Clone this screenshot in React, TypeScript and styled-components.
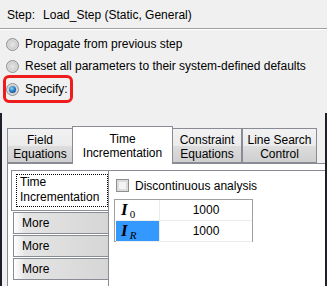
import styled, { createGlobalStyle } from "styled-components";

const Global = createGlobalStyle`
  html, body {
    margin: 0;
    padding: 0;
    background: #f0f0f0;
  }
  body {
    font-family: "Liberation Sans", Arial, sans-serif;
    font-size: 12px;
    color: #000;
  }
`;

const Page = styled.div`
  width: 327px;
  height: 286px;
  overflow: hidden;
  background: #f0f0f0;
`;

const Header = styled.div`
  height: 28px;
  display: flex;
  align-items: center;
  padding: 1px 0 0 7px;
  box-sizing: border-box;
`;

const StepName = styled.span`
  margin-left: 8px;
`;

const Separator = styled.div`
  height: 1px;
  background: #a0a0a0;
  border-bottom: 1px solid #fff;
`;

const RadioGroup = styled.div`
  display: flex;
  flex-direction: column;
  align-items: flex-start;
  padding: 3px 0 0 3px;
`;

const RadioRow = styled.div<{ $highlight?: boolean }>`
  display: flex;
  align-items: center;
  gap: 6px;
  height: 22px;
  white-space: nowrap;
  padding: 0 ${(p) => (p.$highlight ? "2px" : "0")} 0 ${(p) => (p.$highlight ? "0" : "3px")};
  border: ${(p) => (p.$highlight ? "3px solid #ee1c1c" : "none")};
  border-radius: 6px;
  margin-top: ${(p) => (p.$highlight ? "-2px" : "0")};
`;

const RadioDot = styled.span<{ $checked?: boolean }>`
  width: 13px;
  height: 13px;
  box-sizing: border-box;
  border-radius: 50%;
  border: 1px solid #8e8f8f;
  background: radial-gradient(circle at 50% 50%, #e6e6e6 0%, #d0d0d0 55%, #f6f6f6 100%);
  display: flex;
  align-items: center;
  justify-content: center;
  flex: none;

  &::after {
    content: "";
    display: ${(p) => (p.$checked ? "block" : "none")};
    width: 7px;
    height: 7px;
    border-radius: 50%;
    background: radial-gradient(circle at 40% 35%, #8fd3ff 0%, #1a6fb8 55%, #0d3f7a 100%);
  }
`;

const Frame = styled.div`
  margin-top: 10px;
  height: 173px;
  border-left: 2px solid #1d1f2b;
  border-right: 2px solid #1d1f2b;
  padding: 13px 0 0 5px;
  box-sizing: border-box;
`;

const TabBar = styled.div`
  display: flex;
  align-items: flex-end;
  height: 37px;
  position: relative;
  z-index: 1;
`;

const Tab = styled.div<{ $active?: boolean; $w: number }>`
  width: ${(p) => p.$w}px;
  box-sizing: border-box;
  height: ${(p) => (p.$active ? "38px" : "35px")};
  margin: 0 ${(p) => (p.$active ? "-1px" : "0")} ${(p) => (p.$active ? "-1px" : "0")}
    ${(p) => (p.$active ? "-1px" : "0")};
  border: 1px solid #898c95;
  border-bottom: ${(p) => (p.$active ? "none" : "1px solid #898c95")};
  background: ${(p) =>
    p.$active ? "#fff" : "linear-gradient(#f2f2f2, #ebebeb 50%, #dddddd 51%, #cfcfcf)"};
  display: flex;
  flex-direction: column;
  align-items: center;
  justify-content: center;
  line-height: 14px;
  text-align: center;
  white-space: nowrap;
  padding-top: ${(p) => (p.$active ? "0" : "3px")};
`;

const Panel = styled.div`
  border-top: 1px solid #898c95;
  border-left: 1px solid #898c95;
  background: #fff;
  height: 200px;
  padding: 6px 0 0 3px;
  display: flex;
`;

const SideTabs = styled.div`
  width: 97px;
  display: flex;
  flex-direction: column;
  align-items: flex-end;
  border-right: 1px solid #898c95;
  background: #fff;
`;

const SideActive = styled.div`
  width: 97px;
  height: 41px;
  box-sizing: border-box;
  background: #fff;
  border: 1px solid #898c95;
  border-right: none;
  padding: 3px 0 3px 4px;
`;

const FocusBox = styled.div`
  height: 100%;
  box-sizing: border-box;
  border: 1px dotted #000;
  padding: 0 0 0 3px;
  line-height: 15px;
  white-space: nowrap;
`;

const SideTab = styled.div`
  width: 95px;
  height: 22px;
  box-sizing: border-box;
  border: 1px solid #898c95;
  border-right: none;
  margin-top: 1px;
  background: linear-gradient(90deg, #ffffff 0%, #e4e4e4 12%, #d6d6d6 100%);
  display: flex;
  align-items: center;
  padding-left: 8px;

  &:first-of-type {
    margin-top: 0;
  }
`;

const Content = styled.div`
  flex: 1;
  border-top: 1px solid #898c95;
  padding: 8px 0 0 5px;
`;

const CheckRow = styled.div`
  display: flex;
  align-items: center;
  gap: 6px;
  height: 13px;
  padding-left: 2px;
`;

const CheckBox = styled.span`
  width: 13px;
  height: 13px;
  box-sizing: border-box;
  border: 1px solid #8e8f8f;
  background: #f4f4f4;
  box-shadow: inset 0 0 0 2px #dcdcdc;
`;

const Table = styled.div`
  margin-top: 7px;
  width: 139px;
  box-sizing: border-box;
  border: 1px solid #a0a0a0;
  display: grid;
  grid-template-columns: 43px 1fr;
  grid-auto-rows: 20px;
  row-gap: 1px;
  padding: 0 0 0 1px;
  background: #fff;
`;

const Cell = styled.div<{ $selected?: boolean; $center?: boolean }>`
  display: flex;
  align-items: center;
  justify-content: ${(p) => (p.$center ? "center" : "flex-start")};
  padding-left: ${(p) => (p.$center ? "0" : "5px")};
  background: ${(p) => (p.$selected ? "#3399ff" : "#fff")};
  border-left: ${(p) => (p.$center ? "1px solid #ececec" : "none")};
  box-shadow: 0 1px 0 #ececec;
`;

const Sym = styled.span`
  font-family: "Liberation Serif", "Times New Roman", serif;
  font-weight: bold;
  font-style: italic;
  font-size: 17px;
`;

const Sub = styled.span<{ $italic?: boolean }>`
  font-family: "Liberation Serif", "Times New Roman", serif;
  font-style: ${(p) => (p.$italic ? "italic" : "normal")};
  font-size: 11px;
  position: relative;
  top: 4px;
  margin-left: 2px;
`;

const tabs = [
  { a: "Field", b: "Equations", w: 66 },
  { a: "Time", b: "Incrementation", w: 101, active: true },
  { a: "Constraint", b: "Equations", w: 70 },
  { a: "Line Search", b: "Control", w: 75 },
];

export default function App() {
  return (
    <Page>
      <Global />
      <Header>
        Step:<StepName>Load_Step (Static, General)</StepName>
      </Header>
      <Separator />
      <RadioGroup>
        <RadioRow>
          <RadioDot />
          Propagate from previous step
        </RadioRow>
        <RadioRow>
          <RadioDot />
          Reset all parameters to their system-defined defaults
        </RadioRow>
        <RadioRow $highlight>
          <RadioDot $checked />
          Specify:
        </RadioRow>
      </RadioGroup>
      <Frame>
        <TabBar>
          {tabs.map((t) => (
            <Tab key={t.a} $w={t.w} $active={t.active}>
              <span>{t.a}</span>
              <span>{t.b}</span>
            </Tab>
          ))}
        </TabBar>
        <Panel>
          <SideTabs>
            <SideActive>
              <FocusBox>
                Time
                <br />
                Incrementation
              </FocusBox>
            </SideActive>
            <SideTab>More</SideTab>
            <SideTab>More</SideTab>
            <SideTab>More</SideTab>
          </SideTabs>
          <Content>
            <CheckRow>
              <CheckBox />
              Discontinuous analysis
            </CheckRow>
            <Table>
              <Cell>
                <Sym>I</Sym>
                <Sub>0</Sub>
              </Cell>
              <Cell $center>1000</Cell>
              <Cell $selected>
                <Sym>I</Sym>
                <Sub $italic>R</Sub>
              </Cell>
              <Cell $center>1000</Cell>
            </Table>
          </Content>
        </Panel>
      </Frame>
    </Page>
  );
}
